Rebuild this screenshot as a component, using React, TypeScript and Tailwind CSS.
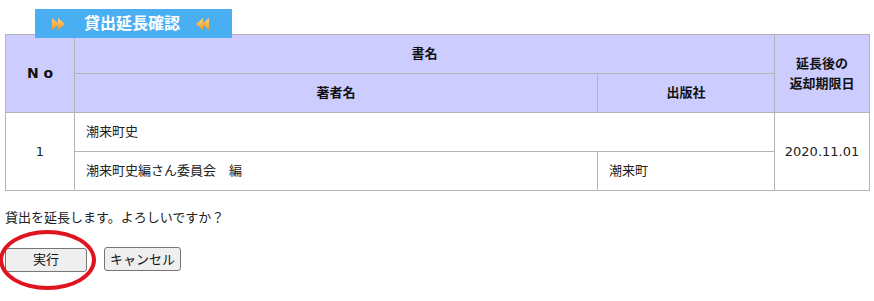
import React from 'react';

const font = { fontFamily: '"DejaVu Sans", "Noto Sans CJK JP", sans-serif' };

const Chevrons = ({ flip }: { flip?: boolean }) => (
  <svg width="14" height="12" viewBox="0 0 14 12" className={flip ? 'scale-x-[-1]' : ''}>
    <defs>
      <linearGradient id={flip ? 'cg2' : 'cg1'} x1="0" y1="0" x2="0" y2="1">
        <stop offset="0" stopColor="#ffd27a" />
        <stop offset="1" stopColor="#f09a2a" />
      </linearGradient>
    </defs>
    <path d="M0 0 L7 6 L0 12 Z M6 0 L13 6 L6 12 Z" fill={`url(#${flip ? 'cg2' : 'cg1'})`} />
  </svg>
);

export default function App() {
  const th = 'border border-[#b4b4b4] bg-[#ccccff] font-bold text-[13px] text-[#111] text-center';
  const td = 'border border-[#b4b4b4] text-[13px] text-[#222]';
  return (
    <div className="w-[874px] h-[301px] bg-white pt-[9px] px-[5px]" style={font}>
      <div className="relative z-10 ml-[30px] mb-[-4px] w-[197px] h-[29px] bg-[#4aaef2] flex items-center">
        <div className="ml-[17px]"><Chevrons /></div>
        <span className="ml-[18px] text-white font-bold text-[16px]">貸出延長確認</span>
        <div className="ml-[15px]"><Chevrons flip /></div>
      </div>
      <table className="border-collapse w-[864px] table-fixed">
        <colgroup>
          <col className="w-[69px]" />
          <col className="w-[523px]" />
          <col className="w-[177px]" />
          <col className="w-[95px]" />
        </colgroup>
        <tbody>
          <tr className="h-[39px]">
            <th rowSpan={2} className={`${th} text-[14px]`}>N o</th>
            <th colSpan={2} className={th}>書名</th>
            <th rowSpan={2} className={`${th} leading-[20px]`}>延長後の<br />返却期限日</th>
          </tr>
          <tr className="h-[39px]">
            <th className={th}>著者名</th>
            <th className={th}>出版社</th>
          </tr>
          <tr className="h-[39px]">
            <td rowSpan={2} className={`${td} text-center`}>1</td>
            <td colSpan={2} className={`${td} px-[11px]`}>潮来町史</td>
            <td rowSpan={2} className={`${td} text-center`}>2020.11.01</td>
          </tr>
          <tr className="h-[39px]">
            <td className={`${td} px-[11px]`}>潮来町史編さん委員会　編</td>
            <td className={`${td} px-[11px]`}>潮来町</td>
          </tr>
        </tbody>
      </table>
      <p className="mt-[19px] text-[13px] text-[#222] leading-[16px]">貸出を延長します。よろしいですか？</p>
      <div className="mt-[21px] flex items-center gap-[17px]">
        <div className="relative">
          <button className="w-[82px] h-[24px] rounded-[3px] border border-[#767676] bg-[#efefef] text-[13px] text-[#111]">実行</button>
          <div className="absolute left-[-6px] top-[-17px] w-[97px] h-[60px] rounded-[50%] border-[4px] border-[#e0141e]" />
        </div>
        <button className="w-[77px] h-[24px] rounded-[3px] border border-[#767676] bg-[#efefef] text-[13px] text-[#111]">キャンセル</button>
      </div>
    </div>
  );
}
